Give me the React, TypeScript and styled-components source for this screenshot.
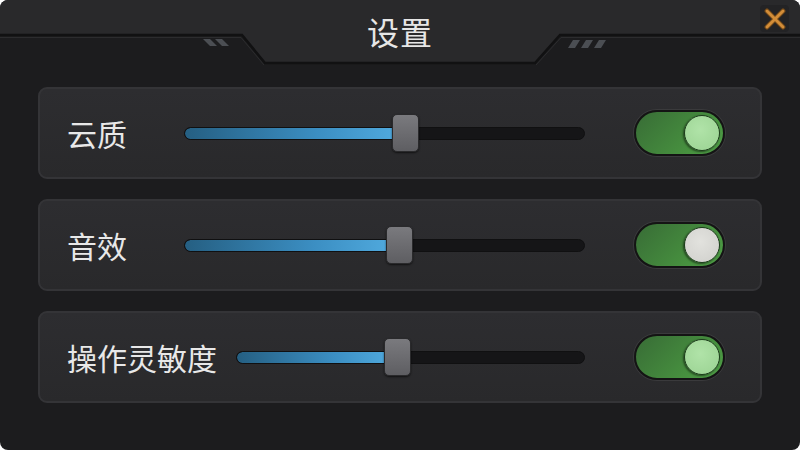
import React, { FC } from 'react'
import styled, { createGlobalStyle } from 'styled-components'

const GlobalStyle = createGlobalStyle`
  html, body {
    margin: 0;
    padding: 0;
    background: #ffffff;
  }
  body {
    font-family: "Noto Sans CJK SC", "Noto Sans", sans-serif;
  }
`

interface Setting {
  label: string
  value: number
  knob: 'green' | 'grey'
}

const settings: Setting[] = [
  { label: '云质', value: 55, knob: 'green' },
  { label: '音效', value: 53.5, knob: 'grey' },
  { label: '操作灵敏度', value: 46, knob: 'green' },
]

const SettingRow: FC<Setting> = ({ label, value, knob }) => (
  <Row>
    <Label>{label}</Label>
    <Slider>
      <Track>
        <Fill style={{ width: `${value}%` }} />
      </Track>
      <Thumb style={{ left: `${value}%` }} />
    </Slider>
    <Toggle>
      <Knob knob={knob} />
    </Toggle>
  </Row>
)

const App: FC = () => (
  <>
    <GlobalStyle />
    <Panel>
      <Header>
        <HeaderFrame viewBox="0 0 800 66" preserveAspectRatio="none">
          <path
            d="M0 0 H800 V35 H560 L535 63 H265 L242 35 H0 Z"
            fill="#29292b"
          />
          <path
            d="M0 35 H242 L265 63 H535 L560 35 H800"
            fill="none"
            stroke="#111112"
            strokeWidth="2.5"
          />
          <path
            d="M0 37.5 H241 L264 65"
            fill="none"
            stroke="#2c2c2e"
            strokeWidth="1"
          />
          <path
            d="M536 65 L561 37.5 H800"
            fill="none"
            stroke="#2c2c2e"
            strokeWidth="1"
          />
          <g fill="#4b4e53">
            <polygon points="203,39 210,39 217,46 210,46" />
            <polygon points="215,39 222,39 229,46 222,46" />
            <polygon points="568,48 575,48 580,40 573,40" />
            <polygon points="581,48 588,48 593,40 586,40" />
            <polygon points="594,48 601,48 606,40 599,40" />
          </g>
        </HeaderFrame>
        <Title>设置</Title>
        <CloseButton aria-label="close">
          <svg width="22" height="22" viewBox="0 0 22 22">
            <path
              d="M3 3 L19 19 M19 3 L3 19"
              stroke="#6a4418"
              strokeWidth="5"
              strokeLinecap="round"
            />
            <path
              d="M3 3 L19 19 M19 3 L3 19"
              stroke="#d38d38"
              strokeWidth="3"
              strokeLinecap="round"
            />
          </svg>
        </CloseButton>
      </Header>
      <Rows>
        {settings.map((s) => (
          <SettingRow key={s.label} {...s} />
        ))}
      </Rows>
    </Panel>
  </>
)

export default App

const Panel = styled.div`
  width: 800px;
  height: 450px;
  box-sizing: border-box;
  border-radius: 8px;
  overflow: hidden;
  background: #1c1c1e;
  display: flex;
  flex-direction: column;
`

const Header = styled.div`
  position: relative;
  height: 64px;
  flex-shrink: 0;
  display: flex;
  justify-content: center;
`

const HeaderFrame = styled.svg`
  position: absolute;
  left: 0;
  top: 0;
  width: 800px;
  height: 66px;
`

const Title = styled.h1`
  position: relative;
  margin: 0;
  padding-top: 9px;
  font-size: 32px;
  line-height: 44px;
  font-weight: 400;
  color: #e6e6e6;
  letter-spacing: 1px;
`

const CloseButton = styled.button`
  position: absolute;
  top: 5px;
  right: 11px;
  width: 29px;
  height: 27px;
  padding: 0;
  border: none;
  border-radius: 4px;
  background: #232325;
  display: flex;
  align-items: center;
  justify-content: center;
`

const Rows = styled.div`
  display: flex;
  flex-direction: column;
  gap: 20px;
  padding: 23px 38px 0;
`

const Row = styled.div`
  height: 92px;
  box-sizing: border-box;
  border: 2px solid #343437;
  border-radius: 9px;
  background: linear-gradient(#2d2d30, #29292b);
  display: flex;
  align-items: center;
  padding: 0 35px 0 27px;
`

const Label = styled.span`
  min-width: 98px;
  margin-right: 19px;
  font-size: 30px;
  color: #e8e8e8;
  white-space: nowrap;
`

const Slider = styled.div`
  position: relative;
  flex: 1;
  height: 40px;
  display: flex;
  align-items: center;
`

const Track = styled.div`
  width: 100%;
  height: 13px;
  box-sizing: border-box;
  border: 1px solid #101011;
  border-radius: 7px;
  background: #151517;
  overflow: hidden;
`

const Fill = styled.div`
  height: 100%;
  border-radius: 6px;
  background: linear-gradient(90deg, #255f82, #3b8ec2 60%, #52ace0);
`

const Thumb = styled.div`
  position: absolute;
  top: 1px;
  width: 27px;
  height: 38px;
  margin-left: -13px;
  box-sizing: border-box;
  border: 1px solid #2a2a2c;
  border-radius: 5px;
  background: linear-gradient(#7a7a7e, #5e5e62);
  box-shadow: 0 1px 2px rgba(0, 0, 0, 0.6);
`

const Toggle = styled.div`
  width: 91px;
  height: 46px;
  margin-left: 49px;
  box-sizing: border-box;
  border: 2px solid #141414;
  border-radius: 23px;
  background: linear-gradient(135deg, #386c36, #47913f 70%, #4f9e47);
  display: flex;
  align-items: center;
  justify-content: flex-end;
  padding-right: 3px;
  box-shadow: 0 0 0 1px #3a3a3c;
`

const Knob = styled.div<{ knob: 'green' | 'grey' }>`
  width: 36px;
  height: 36px;
  box-sizing: border-box;
  border-radius: 50%;
  border: 1px solid #1d3b1c;
  background: ${({ knob }) =>
    knob === 'green'
      ? 'radial-gradient(circle at 45% 40%, #b0e3a8, #9ad292)'
      : 'radial-gradient(circle at 45% 40%, #e2e2de, #cfcfcb)'};
  box-shadow: -1px 1px 2px rgba(0, 0, 0, 0.5);
`
